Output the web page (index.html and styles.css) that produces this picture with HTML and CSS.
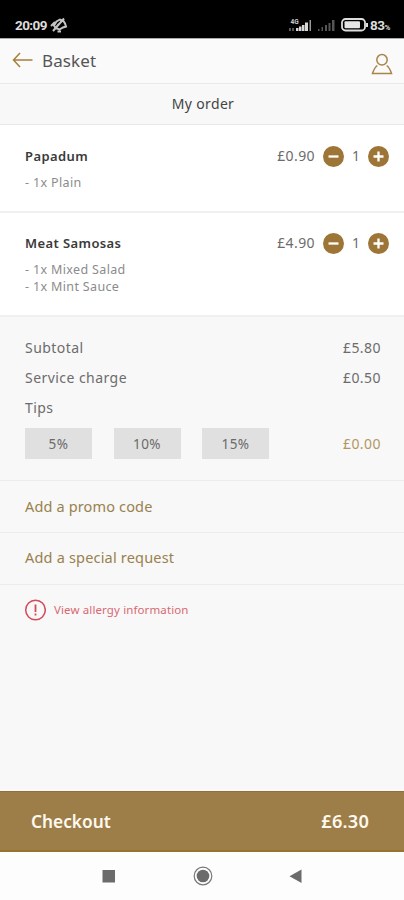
FILE: index.html
```
<!DOCTYPE html>
<html lang="en">
<head>
<meta charset="utf-8">
<title>Basket</title>
<link rel="stylesheet" href="styles.css">
</head>
<body>
<div class="phone">
  <div class="status">
    <span class="clock">20:09</span>
    <svg class="mute" width="18" height="16" viewBox="0 0 18 16" fill="none" stroke="#c4c4c4" stroke-width="2"><path d="M5.500 11 4 8.500 6.500 4.500 10 2.500 13.500 4 15 6.500 16 9.500 13 10.500 9.500 12.500zM1 9 5 5M7.500 14.500h3.500M3 14 14 1.500M7 9l4-4"/></svg>
    <svg class="signals" width="48" height="16" viewBox="0 0 48 16"><g fill="#d8d8d8"><path d="M7 11h2.500v3H7zM10 9.500h2.500V14H10zM13 8h2.500v6H13zM16 5.500h3V14h-3z"/><path fill="#999" d="M20.500 3H22v11h-1.500z"/><path fill="#555" d="M0 11h2v3H0zM3 11h2v3H3z"/></g><g fill="#555"><path d="M29 12h1.500v2H29zM32.500 10H34v4h-1.500zM36 8h2v6h-2zM39.500 6h2v8h-2zM43 3h2.500v11H43z"/></g><text x="1.500" y="6.500" class="tiny">4G</text></svg>
    <svg class="battery" width="28" height="14" viewBox="0 0 28 14"><rect x="1" y="1" width="23" height="11.500" rx="3.500" fill="none" stroke="#ddd" stroke-width="1.800"/><rect x="3.500" y="3.300" width="15.500" height="7" rx="1" fill="#e6e6e6"/><path d="M25 5h2v4h-2z" fill="#ddd"/></svg>
    <span class="level">83<small>%</small></span>
  </div>
  <header class="bar">
    <svg class="back" width="22" height="16" viewBox="0 0 22 16" fill="none" stroke="#a57f3c" stroke-width="1.500"><path d="M8 1 1.500 8 8 15M1.500 8H20.500"/></svg>
    <span class="screen">Basket</span>
    <svg class="user" width="22" height="22" viewBox="0 0 22 22" fill="none" stroke="#a88549" stroke-width="1.500"><circle cx="11" cy="6.800" r="5.200"/><path d="M6.300 12.500Q3.500 14.500 1.500 20.500H20.500Q18.500 14.500 15.700 12.500"/></svg>
  </header>
  <h1 class="title"><span>My order</span></h1>
  <section class="item first">
    <div class="line"><span class="name">Papadum</span><span class="price">£0.90</span>
      <svg class="step" viewBox="0 0 21 21"><circle cx="10.500" cy="10.500" r="10.500"/><path d="M5.500 10.500h10"/></svg><span class="qty">1</span><svg class="step" viewBox="0 0 21 21"><circle cx="10.500" cy="10.500" r="10.500"/><path d="M5.500 10.500h10M10.500 5.500v10"/></svg></div>
    <ul><li>- 1x Plain</li></ul>
  </section>
  <section class="item second">
    <div class="line"><span class="name">Meat Samosas</span><span class="price">£4.90</span>
      <svg class="step" viewBox="0 0 21 21"><circle cx="10.500" cy="10.500" r="10.500"/><path d="M5.500 10.500h10"/></svg><span class="qty">1</span><svg class="step" viewBox="0 0 21 21"><circle cx="10.500" cy="10.500" r="10.500"/><path d="M5.500 10.500h10M10.500 5.500v10"/></svg></div>
    <ul><li>- 1x Mixed Salad</li><li>- 1x Mint Sauce</li></ul>
  </section>
  <section class="totals">
    <div class="row"><span>Subtotal</span><span class="sum">£5.80</span></div>
    <div class="row"><span>Service charge</span><span class="sum">£0.50</span></div>
    <div class="row"><span>Tips</span></div>
    <div class="tips"><button>5%</button><button>10%</button><button>15%</button><span class="sum gold">£0.00</span></div>
  </section>
  <a class="link promo">Add a promo code</a>
  <a class="link request">Add a special request</a>
  <div class="allergy">
    <svg width="22" height="22" viewBox="0 0 22 22" fill="none" stroke="#d24c5a" stroke-width="1.500"><circle cx="11.500" cy="11" r="9.800"/><path d="M11.500 5.500v7.500M11.500 14.500v2" stroke-width="1.800"/></svg>
    <span>View allergy information</span>
  </div>
  <div class="checkout"><span>Checkout</span><span class="amount">£6.30</span></div>
  <nav class="nav">
    <svg width="202" height="22" viewBox="0 0 202 22"><path d="M1.500 5h12.500v12.500H1.500z" fill="#6b6b6b"/><circle cx="102" cy="11" r="8.800" fill="none" stroke="#777" stroke-width="1.200"/><circle cx="102" cy="11" r="6.300" fill="#6b6b6b"/><path d="M200.500 4.500v13.500L188.500 11.200z" fill="#6b6b6b"/></svg>
  </nav>
</div>
</body>
</html>
```
FILE: styles.css
```
* { box-sizing: border-box; }
body { margin: 0; font-family: "Noto Sans", "Open Sans", sans-serif; }
.phone { width: 404px; height: 900px; display: flex; flex-direction: column; background: #f8f8f8; color: #6c6c6c; overflow: hidden; }
.phone > * { flex-shrink: 0; }
.status { height: 38px; background: #000; display: flex; align-items: center; padding: 11px 14px 0 15px; color: #ddd; font: 700 13.5px Roboto, sans-serif; }
.clock { letter-spacing: -.6px; }
.mute { margin-left: 3px; }
.signals { margin-left: auto; }
.tiny { font: 700 6.5px Roboto, sans-serif; fill: #ccc; }
.battery { margin-left: 4px; }
.level { margin-left: 1px; letter-spacing: -.5px; }
.level small { font-size: 8px; }
.bar { height: 46px; display: flex; align-items: center; padding: 0 11px 0 12px; border-top: 1px solid #aaa; border-bottom: 1px solid #e9e9e9; background: #fafafa; }
.back { margin-top: -3px; }
.screen { margin: -1px 0 0 8px; font-size: 17px; color: #555; letter-spacing: .1px; }
.user { margin: 5px 0 0 auto; }
.title { height: 41px; margin: 0; padding: 0 0 2px 2px; display: flex; align-items: center; justify-content: center; font-size: 14px; font-weight: 400; letter-spacing: .35px; color: #444; border-bottom: 1px solid #e8e8e8; }
.item { background: #fff; border-bottom: 2px solid #f0f0f0; padding: 20px 15px 0 25px; }
.first { height: 88px; }
.second { height: 104px; padding-top: 19px; }
.line { display: flex; align-items: center; height: 22px; }
.name { color: #3a3a3a; font-weight: 600; font-size: 13px; letter-spacing: .4px; padding-bottom: 1px; }
.price { margin-left: auto; font-size: 14px; letter-spacing: .4px; padding-bottom: 2px; }
.step { width: 21px; height: 21px; margin-left: 8px; fill: #9c7537; stroke: #fff; stroke-width: 2.3; }
.step circle { stroke: none; }
.qty { width: 8px; margin-left: 8px; padding-bottom: 2px; font-size: 14px; }
ul { list-style: none; margin: 8px 0 0; padding: 0; font-size: 12.5px; line-height: 16.5px; letter-spacing: .35px; color: #8b8b8b; }
.totals { height: 164px; padding: 16px 23px 0 25px; border-bottom: 1px solid #ececec; font-size: 14px; letter-spacing: .45px; }
.row { display: flex; justify-content: space-between; height: 30px; line-height: 30px; }
.tips { display: flex; align-items: center; gap: 21.5px; margin-top: 5px; }
.tips button { width: 67px; height: 31px; border: 0; padding: 0; background: #e0e0e0; font: 13.5px "Noto Sans", sans-serif; letter-spacing: .5px; color: #6a6a6a; }
.tips .sum { margin-left: auto; }
.sum { letter-spacing: .45px; }
.gold { color: #b39762; }
.link { height: 52px; padding-left: 25px; line-height: 51px; color: #98814e; font-size: 14.5px; letter-spacing: .15px; border-bottom: 1px solid #ececec; }
.request { line-height: 49px; letter-spacing: .19px; }
.allergy { height: 206px; display: flex; align-items: flex-start; padding: 14px 0 0 24px; gap: 8px; color: #d86873; font-size: 11.5px; letter-spacing: .12px; line-height: 22px; }
.checkout { height: 61px; background: #9d7e48; border-top: 1px solid #90713a; border-bottom: 2px solid #997232; color: #fff9ef; display: flex; justify-content: space-between; align-items: center; padding: 0 35px 0 31px; font-size: 17.3px; font-weight: 600; }
.amount { font-size: 18.2px; letter-spacing: .2px; }
.nav { flex: 1 0 auto; background: #fdfdfd; display: flex; justify-content: center; align-items: center; }
```
